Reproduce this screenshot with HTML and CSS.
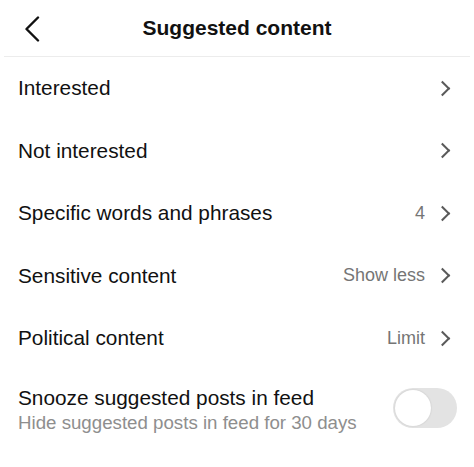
FILE: index.html
```html
<!DOCTYPE html>
<html lang="en">
<head>
<meta charset="UTF-8">
<title>Suggested content</title>
<meta name="viewport" content="width=device-width, initial-scale=1.0">
<link rel="stylesheet" href="styles.css">
</head>
<body>

<header class="topbar">
    <svg class="back" width="16" height="26" viewBox="0 0 16 26"><path d="M14 1.5 L2.5 13 L14 24.5" fill="none" stroke="#111" stroke-width="2.4" stroke-linecap="round" stroke-linejoin="round"/></svg>
    <h1>Suggested content</h1>
</header>

<ul class="menu">
    <li class="row"><span class="label">Interested</span><span class="chev"></span></li>
    <li class="row"><span class="label">Not interested</span><span class="chev"></span></li>
    <li class="row"><span class="label">Specific words and phrases</span><span class="value">4</span><span class="chev"></span></li>
    <li class="row"><span class="label">Sensitive content</span><span class="value">Show less</span><span class="chev"></span></li>
    <li class="row"><span class="label">Political content</span><span class="value">Limit</span><span class="chev"></span></li>
    <li class="row snooze">
        <div class="text">
            <span class="label">Snooze suggested posts in feed</span>
            <span class="sub">Hide suggested posts in feed for 30 days</span>
        </div>
        <span class="toggle"><span class="knob"></span></span>
    </li>
</ul>

</body>
</html>
```

FILE: styles.css
```css
body {
    margin: 0;
    background: #fff;
    font-family: "Liberation Sans", Arial, sans-serif;
    color: #111;
}

.topbar {
    height: 56px;
    display: flex;
    align-items: center;
    justify-content: center;
    position: relative;
    border-bottom: 1px solid #ececec;
    margin: 0 4px;
}

.back {
    position: absolute;
    left: 20px;
    top: 16px;
}

h1 {
    margin: 0;
    font-size: 21px;
    font-weight: bold;
    color: #111;
}

.menu {
    list-style: none;
    margin: 0;
    padding: 0;
}

.row {
    height: 62.5px;
    display: flex;
    align-items: center;
    padding: 0 24px 0 18px;
}

.label {
    flex: 1;
    font-size: 20.8px;
    color: #111;
}

.value {
    font-size: 18px;
    color: #757575;
    margin-right: 12px;
}

.chev {
    width: 9px;
    height: 9px;
    border-top: 2px solid #5a5a5a;
    border-right: 2px solid #5a5a5a;
    transform: rotate(45deg);
    margin-right: 2px;
}

.snooze {
    height: 76px;
    padding-right: 17px;
}

.snooze .text {
    flex: 1;
    display: flex;
    flex-direction: column;
    gap: 2px;
    margin-top: 4px;
}

.sub {
    font-size: 18.7px;
    color: #8e8e8e;
}

.toggle {
    width: 64px;
    height: 40px;
    border-radius: 20px;
    background: #e3e3e3;
    display: flex;
    align-items: center;
    padding: 0 2px;
    box-sizing: border-box;
}

.knob {
    width: 36px;
    height: 36px;
    border-radius: 50%;
    background: #fff;
    box-shadow: 0 0 2px rgba(0,0,0,0.15);
}
```
